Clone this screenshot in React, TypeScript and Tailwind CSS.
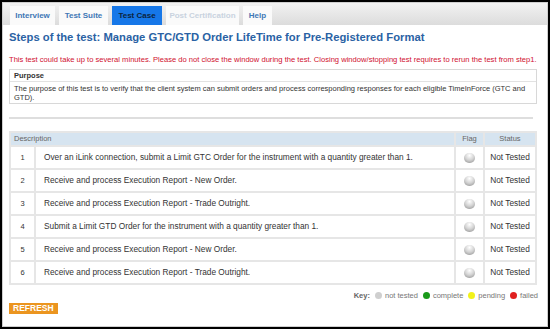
import React from "react";

const rows = [
  "Over an iLink connection, submit a Limit GTC Order for the instrument with a quantity greater than 1.",
  "Receive and process Execution Report - New Order.",
  "Receive and process Execution Report - Trade Outright.",
  "Submit a Limit GTD Order for the instrument with a quantity greater than 1.",
  "Receive and process Execution Report - New Order.",
  "Receive and process Execution Report - Trade Outright.",
];

function Ball({ color }: { color: string }) {
  return (
    <span
      className="inline-block w-[7px] h-[7px] rounded-full"
      style={{ background: color }}
    />
  );
}

const tabs: { t: string; w: string }[] = [
  { t: "Interview", w: "w-[45px]" },
  { t: "Test Suite", w: "w-[49px]" },
  { t: "Test Case", w: "w-[50px]" },
  { t: "Post Certification", w: "w-[73px]" },
  { t: "Help", w: "w-[29px]" },
];

export default function App() {
  return (
    <div
      className="w-[550px] h-[329px] bg-black p-[2px] overflow-hidden"
      style={{ fontFamily: '"Liberation Sans", Arial, sans-serif' }}
    >
      <div className="w-full h-full bg-white border border-[#cfcfcf] flex flex-col">
        <div className="h-[22px] shrink-0 bg-gradient-to-b from-[#f2f2f2] to-[#dcdcdc] flex items-end gap-[4px] px-[7px] pt-[3px]">
          {tabs.map(({ t, w }) => {
            const active = t === "Test Case";
            const disabled = t === "Post Certification";
            return (
              <div
                key={t}
                className={
                  "h-full flex items-center justify-center text-[8px] font-bold " +
                  w +
                  " " +
                  (active
                    ? "bg-[#1677e8] text-[#0b2440]"
                    : disabled
                    ? "bg-[#fafafa] text-[#c9d3df]"
                    : "bg-[#fafafa] text-[#3f77b5]")
                }
              >
                {t}
              </div>
            );
          })}
        </div>
        <div className="px-[6px] pt-[5px] flex flex-col">
          <div className="text-[11.25px] font-bold text-[#2a62a4] leading-[14px]">
            Steps of the test: Manage GTC/GTD Order LifeTime for Pre-Registered Format
          </div>
          <div className="mt-[11px] text-[7.6px] text-[#d0102f] leading-[10px]">
            This test could take up to several minutes. Please do not close the window during the test. Closing window/stopping test requires to rerun the test from step1.
          </div>
          <div className="mt-[4px] w-[528px] border border-[#d8d8d8] text-[7.5px] text-[#333]">
            <div className="font-bold px-[4px] h-[12px] flex items-center border-b border-[#e2e2e2]">Purpose</div>
            <div className="px-[4px] pt-[2px] pb-[1px] leading-[9px]">
              The purpose of this test is to verify that the client system can submit orders and process corresponding responses for each eligible TimeInForce (GTC and GTD).
            </div>
          </div>
          <div className="mt-[13px] w-[524px] h-[2px] bg-[#dedede]" />
          <table className="mt-[12px] w-[528px] border-separate border-spacing-[2px] bg-[#e6e6e6] text-[8.3px] text-[#333]">
            <thead>
              <tr className="h-[12px]">
                <th colSpan={2} className="bg-[#d6e4f0] text-left font-normal px-[3px] text-[7.5px] text-[#666]">Description</th>
                <th className="bg-[#d6e4f0] w-[27px] font-normal text-[7.5px] text-[#666]">Flag</th>
                <th className="bg-[#d6e4f0] w-[50px] font-normal text-[7.5px] text-[#666]">Status</th>
              </tr>
            </thead>
            <tbody>
              {rows.map((r, i) => (
                <tr key={i} className="h-[21px]">
                  <td className="bg-white w-[23px] text-center text-[7.5px] text-[#333]">{i + 1}</td>
                  <td className="bg-white px-[8px]">{r}</td>
                  <td className="bg-white text-center">
                    <span
                      className="inline-block w-[11px] h-[10px] rounded-full align-middle"
                      style={{ background: "radial-gradient(circle at 50% 25%, #ffffff 0%, #d2d2d2 50%, #8c8c8c 100%)" }}
                    />
                  </td>
                  <td className="bg-white text-center">Not Tested</td>
                </tr>
              ))}
            </tbody>
          </table>
          <div className="w-[529px] mt-[5px] h-[11px] flex justify-end items-center gap-[5px] text-[7.5px] text-[#777]">
            <span className="font-bold text-[#666]">Key:</span>
            <span className="flex items-center gap-[3px]"><Ball color="#cfcfcf" />not tested</span>
            <span className="flex items-center gap-[3px]"><Ball color="#1a9a1a" />complete</span>
            <span className="flex items-center gap-[3px]"><Ball color="#f2f21a" />pending</span>
            <span className="flex items-center gap-[3px]"><Ball color="#e02020" />failed</span>
          </div>
          <div className="mt-[2px] flex">
            <span className="bg-[#eb9520] text-white font-bold text-[8.5px] px-[4px] h-[11px] leading-[11px]">REFRESH</span>
          </div>
        </div>
      </div>
    </div>
  );
}
